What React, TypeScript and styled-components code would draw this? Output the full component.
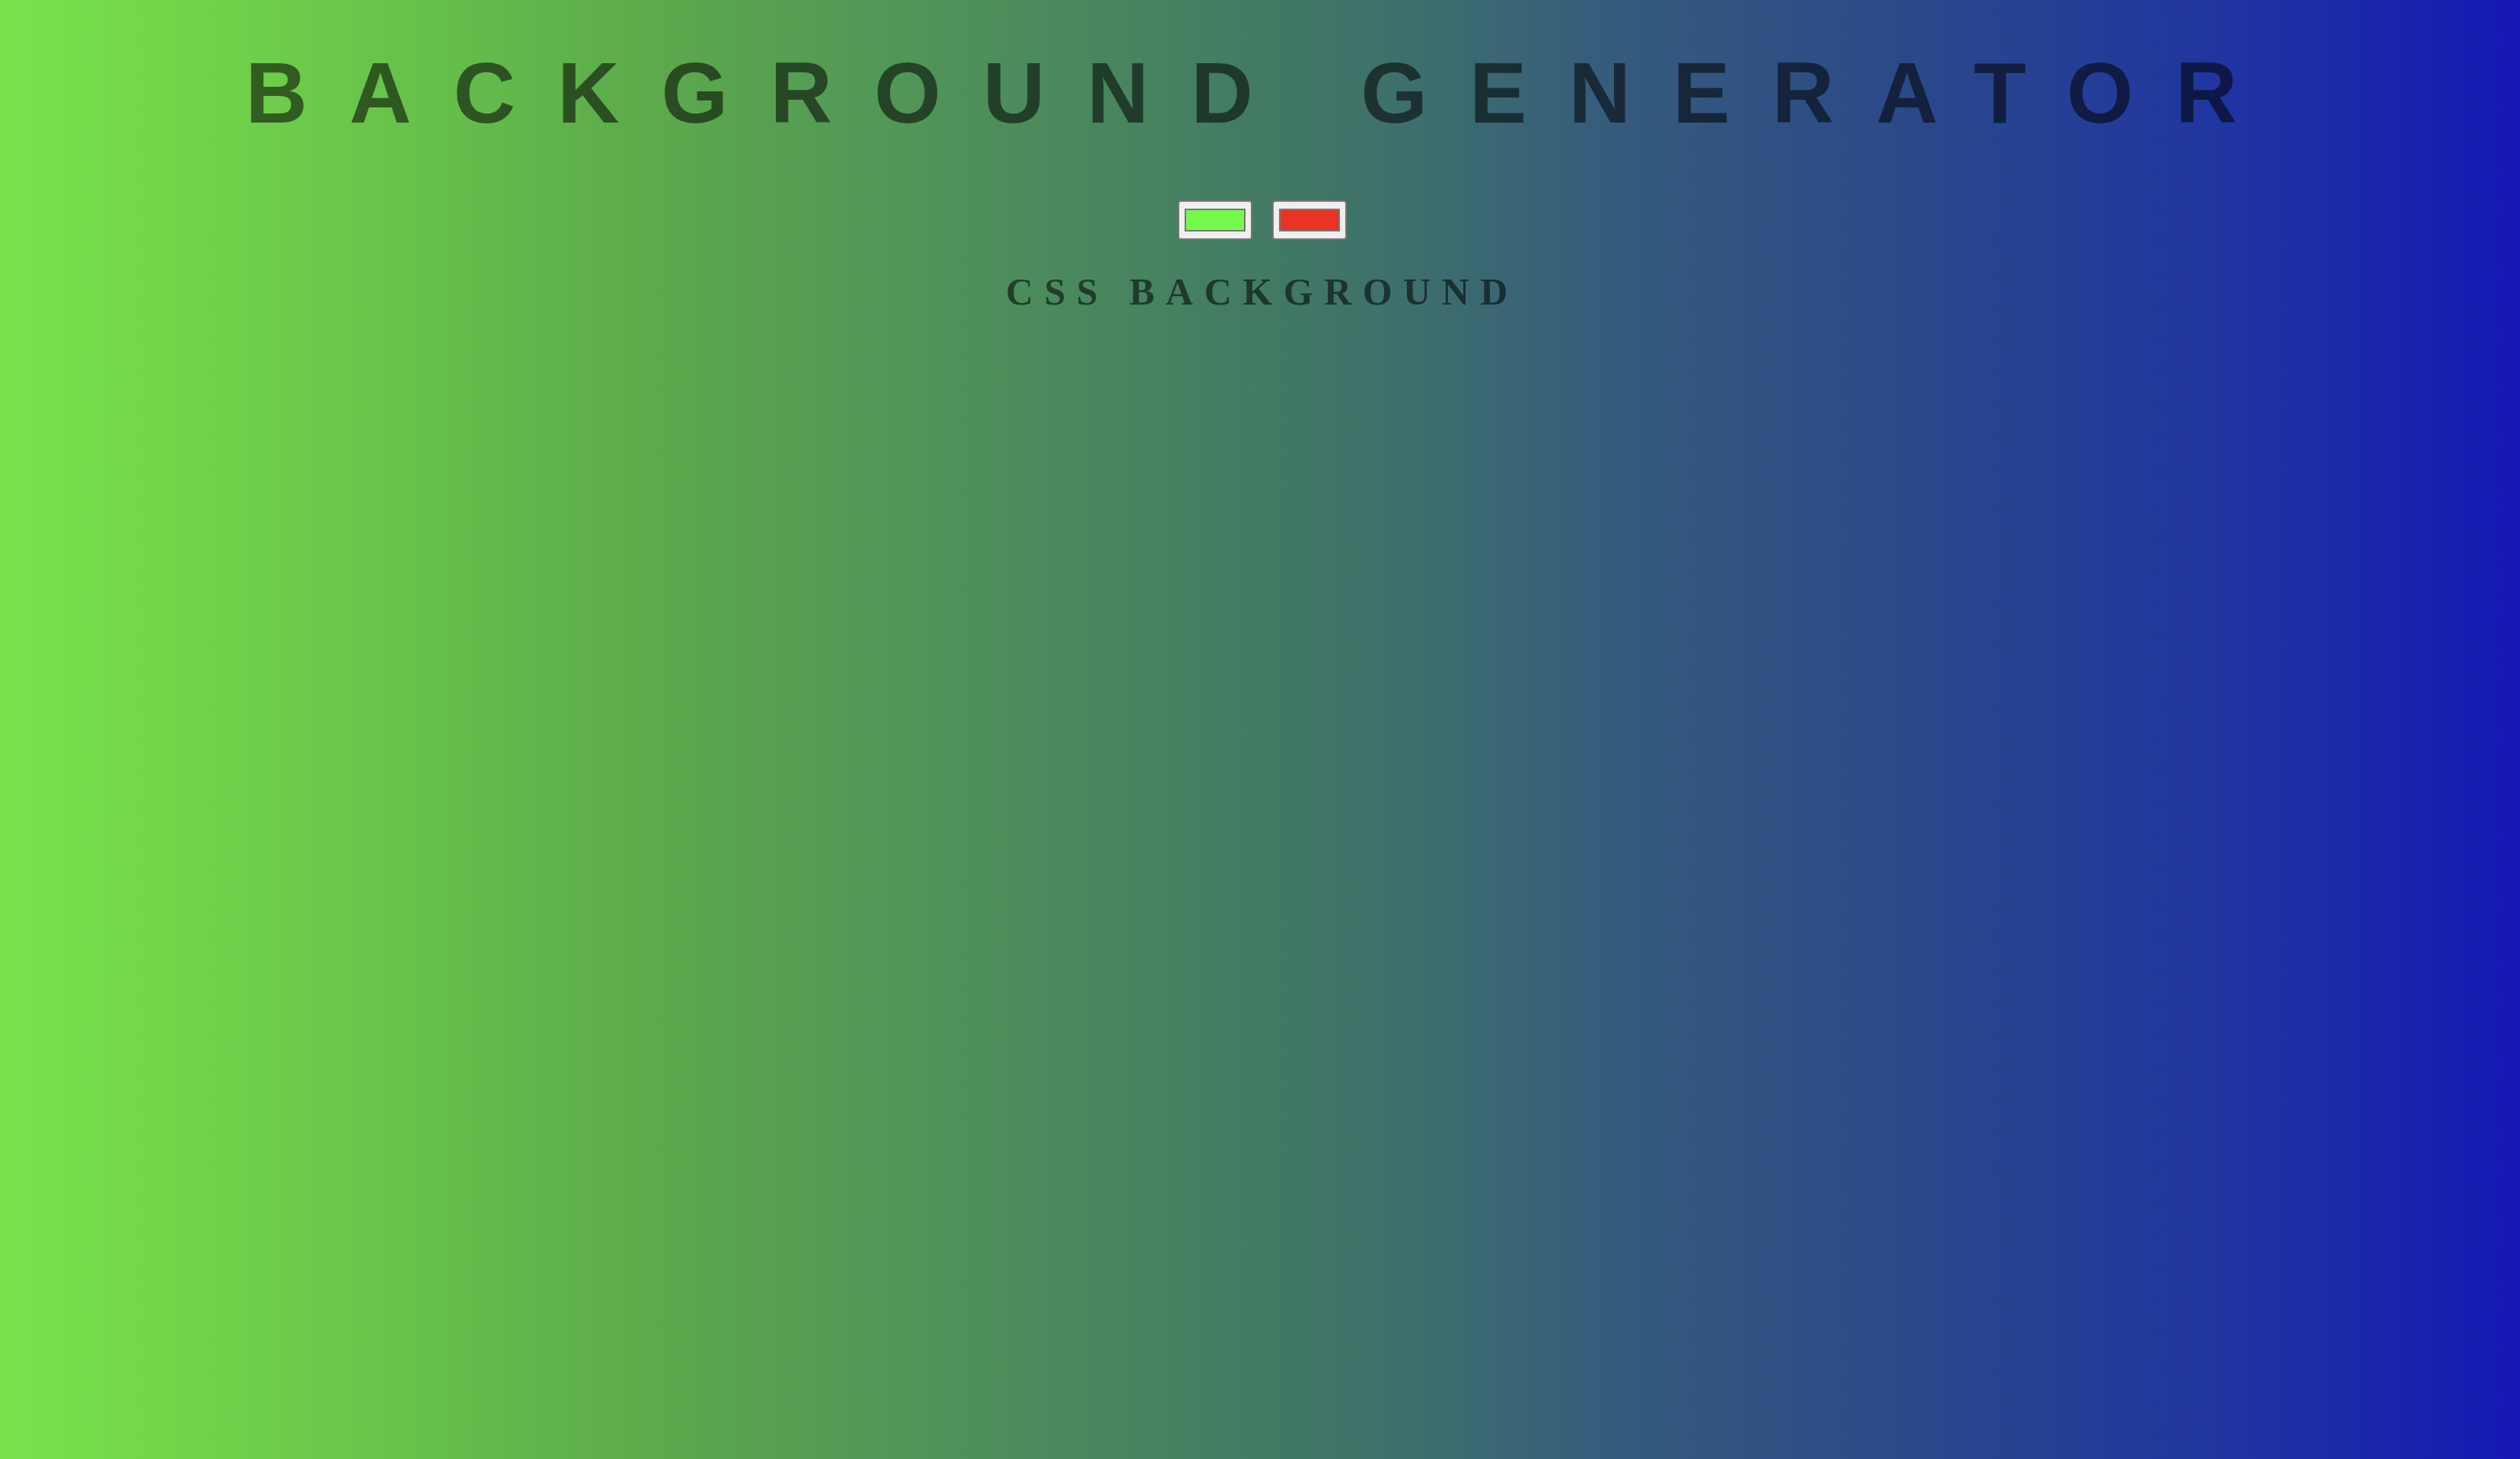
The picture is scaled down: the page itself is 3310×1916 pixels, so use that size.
import React, { useState } from "react";
import styled, { createGlobalStyle } from "styled-components";

const GlobalStyle = createGlobalStyle`
  html, body {
    margin: 0;
    padding: 0;
    height: 100%;
  }
  body {
    font-family: "Liberation Sans", Arial, sans-serif;
  }
  #root {
    min-height: 100%;
  }
`;

const Page = styled.div`
  min-height: 100vh;
  box-sizing: border-box;
  padding-left: 6px;
  display: flex;
  flex-direction: column;
  align-items: center;
  background: linear-gradient(
    to right,
    #78e34b 0%,
    #6ccb4a 12%,
    #5dac4b 25%,
    #4f915a 38%,
    #427a63 50%,
    #3d6f6c 56%,
    #355b7c 64%,
    #2b4a88 75%,
    #2035a0 88%,
    #1518b4 100%
  );
`;

const Title = styled.h1`
  margin: 57px 0 0;
  font-family: "Liberation Sans", Arial, sans-serif;
  font-weight: 700;
  font-size: 113px;
  line-height: 130px;
  letter-spacing: 55px;
  color: rgba(0, 0, 0, 0.55);
  text-align: center;
  white-space: nowrap;
`;

const Pickers = styled.div`
  display: flex;
  gap: 26px;
  margin-top: 76px;
`;

const ColorInput = styled.input.attrs({ type: "color" })`
  -webkit-appearance: none;
  appearance: none;
  box-sizing: border-box;
  width: 98px;
  height: 52px;
  margin: 0;
  padding: 0;
  border: 2px solid #767676;
  border-radius: 4px;
  background: #efefef;
  cursor: pointer;

  &::-webkit-color-swatch-wrapper {
    padding: 9px 7px;
  }
  &::-webkit-color-swatch {
    border: 2px solid #767676;
    border-radius: 0;
  }
`;

const Subtitle = styled.h3`
  margin: 39px 0 0;
  font-family: "Liberation Serif", "Times New Roman", serif;
  font-weight: 700;
  font-size: 50px;
  line-height: 58px;
  letter-spacing: 14.5px;
  color: rgba(0, 0, 0, 0.55);
  text-align: center;
  white-space: nowrap;
`;

export default function App() {
  const [c1, setC1] = useState("#75fa4c");
  const [c2, setC2] = useState("#ea3323");
  return (
    <>
      <GlobalStyle />
      <Page>
        <Title>BACKGROUND GENERATOR</Title>
        <Pickers>
          <ColorInput value={c1} onChange={(e) => setC1(e.target.value)} />
          <ColorInput value={c2} onChange={(e) => setC2(e.target.value)} />
        </Pickers>
        <Subtitle>CSS BACKGROUND</Subtitle>
      </Page>
    </>
  );
}
